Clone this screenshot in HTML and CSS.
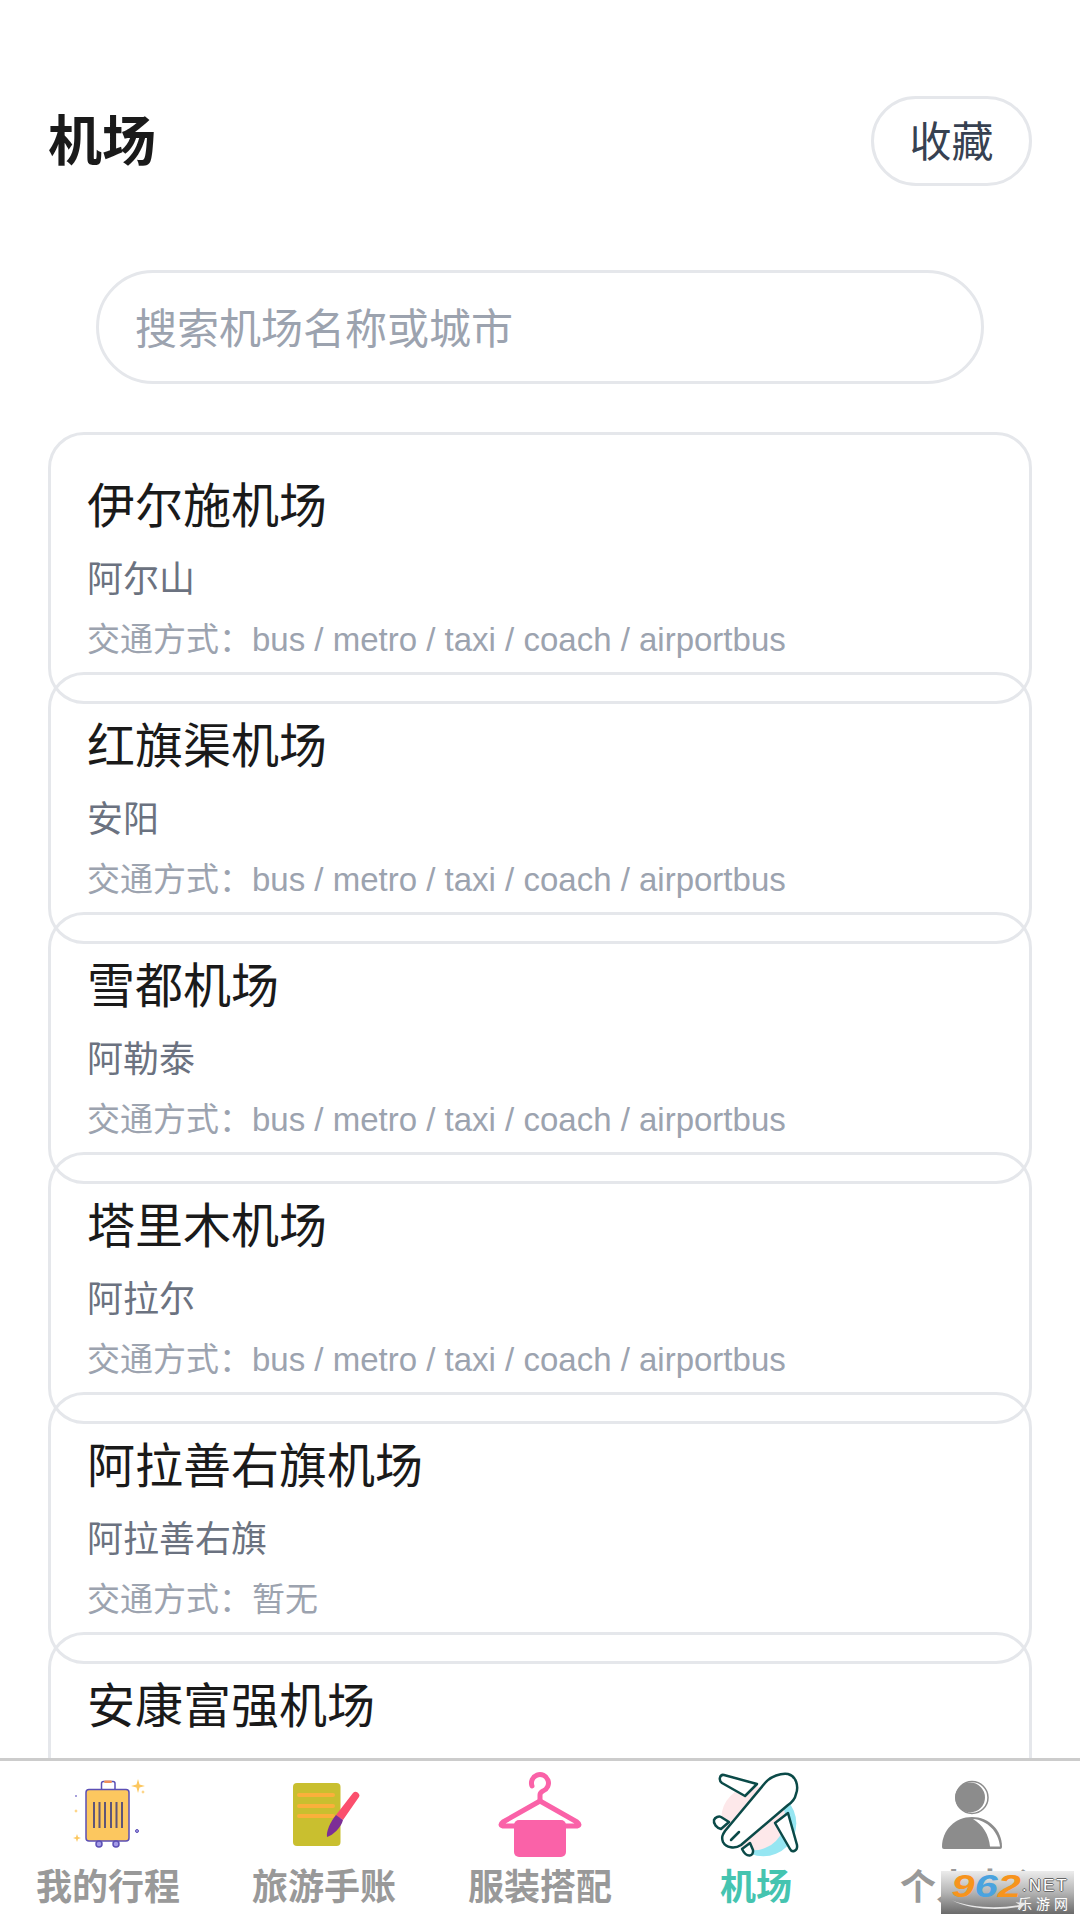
FILE: index.html
```html
<!DOCTYPE html>
<html lang="zh-CN">
<head>
    <meta charset="UTF-8">
    <title>机场</title>
    <link rel="stylesheet" href="styles.css">
</head>
<body>
    <div class="page">
        <header class="top">
            <h1>机场</h1>
            <button class="fav-btn">收藏</button>
        </header>

        <div class="search">
            <input type="text" placeholder="搜索机场名称或城市">
        </div>

        <div class="list">
            <div class="card">
                <h3>伊尔施机场</h3>
                <p class="city">阿尔山</p>
                <p class="traffic">交通方式：bus / metro / taxi / coach / airportbus</p>
            </div>
            <div class="card">
                <h3>红旗渠机场</h3>
                <p class="city">安阳</p>
                <p class="traffic">交通方式：bus / metro / taxi / coach / airportbus</p>
            </div>
            <div class="card">
                <h3>雪都机场</h3>
                <p class="city">阿勒泰</p>
                <p class="traffic">交通方式：bus / metro / taxi / coach / airportbus</p>
            </div>
            <div class="card">
                <h3>塔里木机场</h3>
                <p class="city">阿拉尔</p>
                <p class="traffic">交通方式：bus / metro / taxi / coach / airportbus</p>
            </div>
            <div class="card">
                <h3>阿拉善右旗机场</h3>
                <p class="city">阿拉善右旗</p>
                <p class="traffic">交通方式：暂无</p>
            </div>
            <div class="card">
                <h3>安康富强机场</h3>
            </div>
        </div>
    </div>

    <nav class="tabbar">
        <div class="tab">
            <svg viewBox="0 0 90 90" class="tab-icon">
                <rect x="38.500" y="9.500" width="13.500" height="9" rx="2" fill="none" stroke="#5b4fb5" stroke-width="1.500"/>
                <rect x="41" y="8.500" width="8" height="2.500" rx="1.200" fill="#f0905a"/>
                <rect x="23" y="17.500" width="43" height="51.500" rx="3" fill="#fcc75f" stroke="#5b4fb5" stroke-width="1.500"/>
                <path d="M31 30v26M36.500 30v26M42 30v26M48 30v26M53.500 30v26M59 30v26" stroke="#5f5578" stroke-width="2"/>
                <circle cx="36" cy="72" r="3" fill="#a49be8" stroke="#5b4fb5" stroke-width="1.500"/>
                <circle cx="53" cy="72" r="3" fill="#a49be8" stroke="#5b4fb5" stroke-width="1.500"/>
                <path d="M75 7l1.500 5.500 5.500 1.500-5.500 1.500-1.500 5.500-1.500-5.500-5.500-1.500 5.500-1.500z" fill="#fcc75f"/>
                <path d="M80 18l.6 1.400 1.400.6-1.400.6-.6 1.400-.6-1.400-1.400-.6 1.400-.6z" fill="#fcc75f"/>
                <path d="M13 37l.6 1.400 1.400.6-1.400.6-.6 1.400-.6-1.400-1.400-.6 1.400-.6z" fill="#fcc75f"/>
                <path d="M14 62l1 3 3 1-3 1-1 3-1-3-3-1 3-1z" fill="#fcc75f"/>
                <circle cx="13" cy="24" r="1" fill="#8a80d0"/>
                <circle cx="74" cy="59" r="1.500" fill="#a49be8" stroke="#5b4fb5"/>
            </svg>
            <span>我的行程</span>
        </div>
        <div class="tab">
            <svg viewBox="0 0 90 90" class="tab-icon">
                <rect x="14" y="11" width="47.500" height="63" rx="4" fill="#c9bf2f"/>
                <path d="M20 23h34M20 34h34M20 44h34" stroke="#fbb03b" stroke-width="4" stroke-linecap="round"/>
                <path d="M57 43L74 21Q77 18 80 22Q81 24 80 25L64 48z" fill="#fb4f6d"/>
                <path d="M57 43L64 48C62 56 54 63 48 65C47 60 51 50 57 43z" fill="#7d2e96"/>
            </svg>
            <span>旅游手账</span>
        </div>
        <div class="tab">
            <svg viewBox="0 0 90 90" class="tab-icon">
                <path d="M37 14a8.500 8.500 0 1 1 11 5c-2 1-3 2-3 4v6" fill="none" stroke="#fa62a8" stroke-width="5" stroke-linecap="round"/>
                <path d="M45 29L8 50Q4 53 8 54H82Q86 53 82 50z" fill="none" stroke="#fa62a8" stroke-width="5" stroke-linejoin="round"/>
                <rect x="19" y="48" width="52" height="37" rx="5" fill="#fa62a8"/>
            </svg>
            <span>服装搭配</span>
        </div>
        <div class="tab active">
            <svg viewBox="0 0 90 90" class="tab-icon">
                <circle cx="52.300" cy="51.300" r="33" fill="#96e6f2"/>
                <circle cx="42.300" cy="46.300" r="32" fill="#fde8ea"/>
                <g fill="#fff" stroke="#0b4a48" stroke-width="2.500" stroke-linejoin="round">
                    <path d="M13 3L46 12L34 24L11 11C7 8 9 2 13 3z"/>
                    <path d="M64 51L77 41L86 73C87 79 81 81 79 77z"/>
                    <path d="M18 50L10 57C6 56 2 52 3 48C4 45 8 44 10 45z"/>
                    <path d="M31 77L39 71L42 78C43 84 36 87 31 77z"/>
                    <path d="M54 11C60 4 70 1 77 2C85 4 88 14 85 22C84 27 80 31 77 33L30 73C24 77 15 76 12 70C10 65 12 62 14 59z"/>
                    <path d="M20 68L28 60" stroke-linecap="round"/>
                </g>
            </svg>
            <span>机场</span>
        </div>
        <div class="tab">
            <svg viewBox="0 0 90 90" class="tab-icon">
                <circle cx="45" cy="25.500" r="16" fill="#fff" stroke="#8c8c8c" stroke-width="1.500"/>
                <circle cx="43" cy="25.500" r="15" fill="#8c8c8c"/>
                <path d="M15 75C15 58 28 45 45 45C62 45 75 58 75 75Q75 77 73 77H17Q15 77 15 75z" fill="#8c8c8c"/>
                <path d="M46 47C56 53 62 63 63 74.500H73C72 60 60 48 46 47z" fill="#fff"/>
            </svg>
            <span>个人中心</span>
        </div>
    </nav>

    <div class="watermark">
        <div class="wm-num"><i>9</i><i class="blue">6</i><i>2</i></div>
        <div class="wm-side">
            <em>.NET</em>
            <small>乐游网</small>
        </div>
        <svg class="wm-swoosh" viewBox="0 0 80 12">
            <path d="M1 1C20 9 50 10 72 6L68 3L80 4L70 11L71 8C50 12 20 11 1 1z" fill="#e8e8e8"/>
        </svg>
    </div>
</body>
</html>
```

FILE: styles.css
```css
* {
    box-sizing: border-box;
}

html, body {
    margin: 0;
    padding: 0;
    height: 1920px;
    overflow: hidden;
}

body {
    position: relative;
    background: #fff;
    font-family: "Liberation Sans", "Noto Sans CJK SC", sans-serif;
    color: #1a1a1a;
}

.page {
    height: 1758px;
    overflow: hidden;
    padding: 96px 48px 0;
}

/* top bar */
.top {
    display: flex;
    align-items: center;
    justify-content: space-between;
    height: 90px;
}

.top h1 {
    margin: 0;
    padding-bottom: 7px;
    font-size: 54px;
    font-weight: 700;
    color: #1a1a1a;
}

.fav-btn {
    width: 161px;
    height: 90px;
    background: #fff;
    border: 3px solid #e5e7eb;
    border-radius: 45px;
    font-family: inherit;
    font-size: 42px;
    color: #374151;
    padding: 0 0 6px;
}

/* search */
.search {
    margin: 84px 48px 48px;
}

.search input {
    display: block;
    width: 100%;
    height: 114px;
    border: 3px solid #e5e7eb;
    border-radius: 57px;
    padding: 5px 36px 0;
    font-family: inherit;
    font-size: 42px;
    background: #fff;
    outline: none;
}

.search input::placeholder {
    color: #9ca3af;
    opacity: 1;
}

/* airport cards */
.card {
    height: 272px;
    margin-bottom: -32px;
    padding: 36px 36px 0;
    border: 3px solid #e5e7eb;
    border-radius: 36px;
}

.card h3 {
    margin: 0;
    height: 72px;
    line-height: 72px;
    font-size: 48px;
    font-weight: 400;
    color: #1a1a1a;
}

.card .city {
    margin: 13px 0 0;
    height: 48px;
    line-height: 48px;
    font-size: 36px;
    color: #6b7280;
}

.card .traffic {
    margin: 12px 0 0;
    height: 48px;
    line-height: 48px;
    font-size: 33px;
    color: #9ca3af;
}

/* bottom tabs */
.tabbar {
    display: flex;
    height: 162px;
    border-top: 3px solid #ccc;
    background: #fff;
}

.tab {
    flex: 1;
    display: flex;
    flex-direction: column;
    align-items: center;
    padding-top: 11px;
    font-size: 36px;
    font-weight: 700;
    color: #999;
}

.tab span {
    line-height: 48px;
    margin-top: 2px;
}

.tab.active {
    color: #45c4b0;
}

.tab-icon {
    display: block;
    width: 90px;
    height: 90px;
    overflow: visible;
}

/* watermark over the corner */
.watermark {
    position: absolute;
    right: 6px;
    bottom: 6px;
    width: 133px;
    height: 43px;
    display: flex;
    background: linear-gradient(#ececec, #b4b4b4 50%, #6a6a6a);
    color: #fff;
}

.wm-num {
    width: 81px;
    flex-shrink: 0;
    padding-left: 8px;
    transform: scaleX(1.3);
    transform-origin: left top;
    font-size: 32px;
    font-weight: 700;
    line-height: 30px;
    color: #f7941d;
    white-space: nowrap;
}

.wm-num .blue {
    color: #4aa3df;
}

.wm-side {
    display: flex;
    flex-direction: column;
    padding-top: 6px;
}

.wm-side em {
    font-style: normal;
    font-size: 17px;
    line-height: 17px;
    letter-spacing: 2px;
    color: #fff;
    text-shadow: 1px 0 #666, -1px 0 #666, 0 1px #666, 0 -1px #666;
}

.wm-side small {
    margin: 3px 0 0 -4px;
    font-size: 14px;
    line-height: 15px;
    letter-spacing: 4px;
    white-space: nowrap;
}

.wm-swoosh {
    position: absolute;
    left: 10px;
    bottom: 3px;
    width: 76px;
    height: 12px;
}
```
